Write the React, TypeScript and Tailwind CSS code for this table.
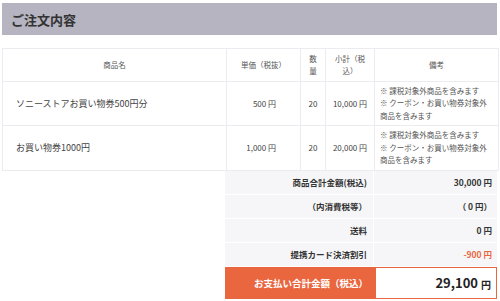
const items = [
  { name: "ソニーストアお買い物券500円分", price: "500 円", qty: "20", subtotal: "10,000 円" },
  { name: "お買い物券1000円", price: "1,000 円", qty: "20", subtotal: "20,000 円" },
];

const summary = [
  { label: "商品合計金額(税込)", value: "30,000 円", red: false },
  { label: "（内消費税等）", value: "（ 0 円）", red: false },
  { label: "送料", value: "0 円", red: false },
  { label: "提携カード決済割引", value: "-900 円", red: true },
];

export default function App() {
  return (
    <div
      className="w-[500px] h-[301px] bg-white px-[2px] pt-[3px] text-[#444] overflow-hidden"
      style={{ fontFamily: '"Noto Sans CJK JP", "Noto Sans", sans-serif' }}
    >
      {/* Title band */}
      <div className="h-[32px] w-[495px] bg-[#b5b4c0] flex items-center pl-[9px]">
        <h2 className="text-[13px] font-bold text-[#333] leading-none">ご注文内容</h2>
      </div>

      {/* Items table */}
      <table className="mt-[13px] w-[496px] border-collapse table-fixed text-[8px] leading-[12px]">
        <colgroup>
          <col className="w-[224px]" />
          <col className="w-[74px]" />
          <col className="w-[25px]" />
          <col className="w-[49px]" />
          <col className="w-[124px]" />
        </colgroup>
        <thead>
          <tr className="h-[33px] text-[#555] text-[7.5px]">
            <th className="border border-[#ececf0] font-normal text-center">商品名</th>
            <th className="border border-[#ececf0] font-normal text-center">単価（税抜）</th>
            <th className="border border-[#ececf0] font-normal text-center px-[6px]">数量</th>
            <th className="border border-[#ececf0] font-normal text-center px-[6px]">小計（税込）</th>
            <th className="border border-[#ececf0] font-normal text-center">備考</th>
          </tr>
        </thead>
        <tbody>
          {items.map((it, i) => (
            <tr key={it.name} className={i === 0 ? "h-[44px]" : "h-[45px]"}>
              <td className="border border-[#ececf0] pl-[13px] text-[9px] text-[#444]">{it.name}</td>
              <td className="border border-[#ececf0] text-right pr-[24px]">{it.price}</td>
              <td className="border border-[#ececf0] text-center">{it.qty}</td>
              <td className="border border-[#ececf0] text-center">{it.subtotal}</td>
              <td className="border border-[#ececf0] pl-[5px] pr-[7px] text-[7.5px] leading-[12.5px] text-[#555]">
                <p>※ 課税対象外商品を含みます</p>
                <p>※ クーポン・お買い物券対象外商品を含みます</p>
              </td>
            </tr>
          ))}
        </tbody>
      </table>

      {/* Summary */}
      <div className="ml-[223px] w-[272px] text-[8.5px] font-bold text-[#333]">
        {summary.map((s) => (
          <div key={s.label} className="flex h-[24px] border-b border-white">
            <div className="w-[149px] bg-[#f6f6f8] flex items-center justify-end pr-[6px] border-r border-white">
              {s.label}
            </div>
            <div
              className={`flex-1 bg-[#f6f6f8] flex items-center justify-end pr-[5px] ${
                s.red ? "text-[#e8663f]" : ""
              }`}
            >
              {s.value}
            </div>
          </div>
        ))}
        <div className="flex h-[32px]">
          <div className="w-[150px] bg-[#e9663f] flex items-center justify-end pr-[7px] text-white text-[9.5px]">
            お支払い合計金額（税込）
          </div>
          <div className="flex-1 border border-[#e9663f] bg-white flex items-center justify-end pr-[5px] text-[#222]">
            <span className="text-[13px] font-bold">29,100</span>
            <span className="text-[10px] font-bold ml-[3px] mt-[2px]">円</span>
          </div>
        </div>
      </div>
    </div>
  );
}
